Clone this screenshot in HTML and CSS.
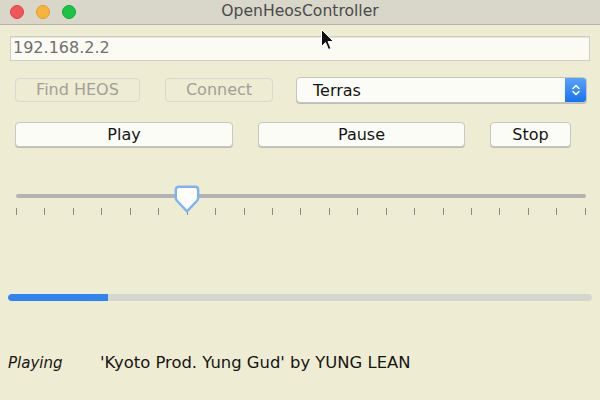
FILE: index.html
```html
<!DOCTYPE html>
<html>
<head>
<meta charset="utf-8">
<link rel="stylesheet" href="styles.css">
</head>
<body>
<div class="window">
  <div class="titlebar">
    <div class="lights">
      <span class="light red"></span>
      <span class="light yellow"></span>
      <span class="light green"></span>
    </div>
    <div class="title">OpenHeosController</div>
  </div>
  <div class="content">
    <div class="field">192.168.2.2</div>
    <div class="row row1">
      <div class="btn disabled find">Find HEOS</div>
      <div class="btn disabled connect">Connect</div>
      <div class="combo">
        <span class="combo-text">Terras</span>
        <span class="stepper">
          <svg width="12" height="18" viewBox="0 0 12 18"><path d="M3 7.5 L6 4.5 L9 7.5 M3 10.5 L6 13.5 L9 10.5" fill="none" stroke="#fff" stroke-width="1.6" stroke-linecap="round" stroke-linejoin="round"/></svg>
        </span>
      </div>
    </div>
    <div class="row row2">
      <div class="btn play">Play</div>
      <div class="btn pause">Pause</div>
      <div class="btn stop">Stop</div>
    </div>
    <div class="slider">
      <div class="track"></div>
      <div class="ticks">
        <i></i><i></i><i></i><i></i><i></i><i></i><i></i><i></i><i></i><i></i><i></i><i></i><i></i><i></i><i></i><i></i><i></i><i></i><i></i><i></i><i></i>
      </div>
      <svg class="thumb" width="26" height="29" viewBox="0 0 26 29"><path d="M5 1.8 H21 Q24.2 1.8 24.2 5 V13 Q24.2 14.5 22.8 16 L13 26.3 L3.2 16 Q1.8 14.5 1.8 13 V5 Q1.8 1.8 5 1.8 Z" fill="#fdfdfb" stroke="#7fb2f2" stroke-width="2.4" stroke-linejoin="round"/></svg>
    </div>
    <div class="progress"><div class="fill" style="width:17.1%"></div></div>
    <div class="status">
      <span class="state">Playing</span>
      <span class="song">'Kyoto Prod. Yung Gud' by YUNG LEAN</span>
    </div>
  </div>
  <svg class="cursor" width="16" height="24" viewBox="0 0 16 24"><path d="M1.5 1.5 V18.5 L5.5 14.5 L8.5 21.5 L11 20.5 L8 13.5 H13.5 Z" fill="#111" stroke="#fff" stroke-width="1"/></svg>
</div>
</body>
</html>
```

FILE: styles.css
```css
html, body {
  margin: 0;
  padding: 0;
}
body {
  width: 600px;
  height: 400px;
  overflow: hidden;
  background: #eeecd2;
  font-family: "DejaVu Sans", "Open Sans", sans-serif;
}
.window {
  position: relative;
  width: 600px;
  height: 400px;
}
.titlebar {
  height: 24px;
  background: #d8d7ca;
  border-bottom: 1px solid #b5b4aa;
  display: flex;
  align-items: center;
  position: relative;
}
.lights {
  display: flex;
  gap: 12px;
  padding-left: 10px;
  position: relative;
  z-index: 1;
}
.light {
  width: 14px;
  height: 14px;
  box-sizing: border-box;
  border-radius: 50%;
  display: block;
}
.red { background: #f4555a; border: 1px solid #de4045; }
.yellow { background: #f7b33a; border: 1px solid #e09c28; }
.green { background: #1ac444; border: 1px solid #12a837; }
.title {
  position: absolute;
  left: 0;
  right: 0;
  top: 2px;
  text-align: center;
  font-size: 15.6px;
  color: #4a4a4a;
}
.content {
  padding: 11px 10px 0 8px;
}
.field {
  margin-left: 2px;
  height: 25px;
  box-sizing: border-box;
  background: #fbfbf4;
  border: 1px solid #cfcfc6;
  box-shadow: inset 0 1px 0 #e4e4dc;
  font-size: 16px;
  line-height: 22px;
  color: #707070;
  padding-left: 2px;
}
.row {
  display: flex;
  align-items: center;
  padding-left: 7px;
}
.row1 {
  margin-top: 16px;
}
.row2 {
  margin-top: 19px;
}
.btn {
  height: 25px;
  box-sizing: border-box;
  border: 1px solid #c8c8c0;
  border-radius: 4px;
  background: #fcfcf6;
  box-shadow: 0 1px 0 #bdbdb5;
  display: flex;
  align-items: center;
  justify-content: center;
  font-size: 16px;
  color: #151515;
  padding-bottom: 1px;
}
.btn.disabled {
  color: #a0a09a;
  background: transparent;
  box-shadow: none;
  border-color: #d8d8ce;
  height: 24px;
}
.find { width: 125px; }
.connect { width: 108px; margin-left: 25px; }
.combo {
  margin-left: 23px;
  width: 291px;
  height: 26px;
  box-sizing: border-box;
  border: 1px solid #c6c6be;
  border-radius: 4px;
  background: #fcfcf6;
  box-shadow: 0 1px 0 #bdbdb5;
  display: flex;
  align-items: center;
  justify-content: space-between;
  overflow: hidden;
}
.combo-text {
  font-size: 16px;
  color: #151515;
  padding-left: 16px;
}
.stepper {
  width: 21px;
  height: 100%;
  background: linear-gradient(#5aa2fb, #1673f0);
  display: flex;
  align-items: center;
  justify-content: center;
}
.play { width: 218px; }
.pause { width: 207px; margin-left: 25px; }
.stop { width: 81px; margin-left: 25px; }
.slider {
  position: relative;
  margin-top: 37px;
  margin-left: 8px;
  padding-top: 10px;
  width: 570px;
}
.track {
  height: 4px;
  background: #b3b3b3;
  border-radius: 2px;
}
.ticks {
  margin-top: 10px;
  display: flex;
  justify-content: space-between;
}
.ticks i {
  display: block;
  width: 1px;
  height: 7px;
  background: #8a8a8a;
}
.thumb {
  position: absolute;
  left: 158px;
  top: 1px;
}
.progress {
  margin-top: 79px;
  margin-right: -2px;
  height: 7px;
  background: #d6d6ce;
  border-radius: 3.5px;
  overflow: hidden;
}
.fill {
  height: 100%;
  background: #2f84f2;
  border-radius: 3.5px 0 0 3.5px;
}
.status {
  margin-top: 52px;
  display: flex;
  align-items: baseline;
  color: #151515;
}
.state {
  font-style: italic;
  font-size: 15px;
  width: 92px;
}
.song {
  font-size: 16.4px;
}
.cursor {
  position: absolute;
  left: 320px;
  top: 28px;
}
```
